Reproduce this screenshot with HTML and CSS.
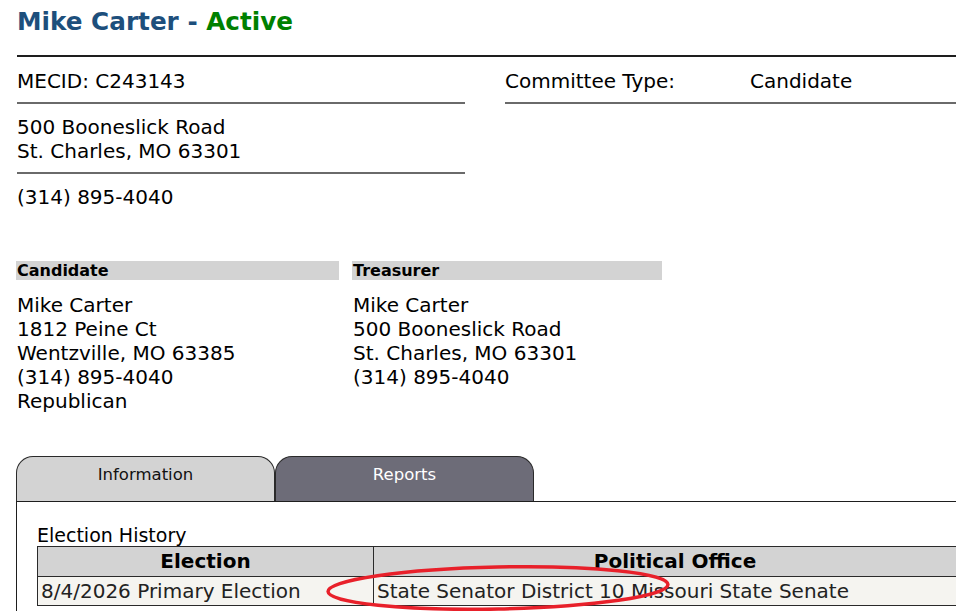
FILE: index.html
```html
<!DOCTYPE html>
<html>
<head>
<meta charset="utf-8">
<title>Mike Carter - Active</title>
<link rel="stylesheet" href="styles.css">
</head>
<body>
<div class="page">
  <h1 class="title">Mike Carter - <span class="status">Active</span></h1>
  <div class="rule"></div>

  <div class="summary">
    <div class="col-left">
      <div class="row">MECID: C243143</div>
      <div class="row">500 Booneslick Road<br>St. Charles, MO 63301</div>
      <div class="row last">(314) 895-4040</div>
    </div>
    <div class="col-right">
      <div class="row type">
        <span class="type-label">Committee Type:</span>
        <span class="type-value">Candidate</span>
      </div>
    </div>
  </div>

  <div class="people">
    <div class="person">
      <div class="person-head">Candidate</div>
      <div class="person-body">Mike Carter<br>1812 Peine Ct<br>Wentzville, MO 63385<br>(314) 895-4040<br>Republican</div>
    </div>
    <div class="person">
      <div class="person-head">Treasurer</div>
      <div class="person-body">Mike Carter<br>500 Booneslick Road<br>St. Charles, MO 63301<br>(314) 895-4040</div>
    </div>
  </div>

  <div class="tabs">
    <div class="tab tab-active">Information</div>
    <div class="tab tab-other">Reports</div>
  </div>
  <div class="panel">
    <div class="caption">Election History</div>
    <table class="history">
      <thead>
        <tr><th class="c-election">Election</th><th>Political Office</th></tr>
      </thead>
      <tbody>
        <tr><td>8/4/2026 Primary Election</td><td>State Senator District 10 Missouri State Senate</td></tr>
      </tbody>
    </table>
  </div>
</div>

<svg class="annot" width="956" height="611" viewBox="0 0 956 611">
  <ellipse cx="498" cy="588" rx="170" ry="21" transform="rotate(-1.2 498 588)" fill="none" stroke="#e8202a" stroke-width="3.5"/>
</svg>
</body>
</html>
```

FILE: styles.css
```css
html, body {
  margin: 0;
  padding: 0;
  overflow: hidden;
  background: #ffffff;
}

body {
  font-family: "DejaVu Sans", Verdana, sans-serif;
  font-size: 20px;
  color: #000000;
}

.page {
  width: 960px;
  padding: 7px 0 0 16px;
}

.title {
  margin: 0;
  font-size: 24.7px;
  line-height: 30px;
  font-weight: bold;
  color: #1d4f7c;
  padding-left: 1px;
}

.status {
  color: #008000;
}

.rule {
  margin-top: 18px;
  margin-left: 1px;
  height: 2px;
  background: #1e1e1e;
}

.summary {
  display: flex;
  gap: 40px;
  padding-left: 1px;
}

.col-left {
  width: 448px;
}

.col-right {
  flex: 1;
}

.row {
  padding: 12px 0 9px;
  line-height: 24px;
  border-bottom: 2px solid #6a6a6a;
}

.row + .row {
  padding-top: 11px;
}

.row.last {
  border-bottom: none;
}

.type {
  display: grid;
  grid-template-columns: 245px 1fr;
}

.people {
  display: grid;
  grid-template-columns: 323px 310px;
  column-gap: 13px;
  margin-top: 43px;
}

.person-head {
  background: #d3d3d3;
  font-size: 16px;
  font-weight: bold;
  line-height: 19px;
  padding-left: 1px;
}

.person-body {
  margin-top: 13px;
  line-height: 24px;
  padding-left: 1px;
}

.tabs {
  display: flex;
  margin-top: 43px;
}

.tab {
  width: 259px;
  height: 45px;
  box-sizing: border-box;
  border: 1px solid #2a2a2a;
  border-bottom: none;
  border-radius: 17px 17px 0 0;
  text-align: center;
  font-size: 16.5px;
  line-height: 20px;
  padding-top: 8px;
}

.tab-active {
  background: #d3d3d3;
  color: #111111;
}

.tab-other {
  background: #6d6c78;
  color: #ffffff;
}

.panel {
  border-top: 1px solid #1e1e1e;
  border-left: 1px solid #1e1e1e;
  padding: 22px 0 0 20px;
  height: 120px;
}

.caption {
  line-height: 22px;
  font-size: 19px;
}

.history {
  border-collapse: collapse;
  width: 940px;
}

.history th,
.history td {
  border: 1px solid #2a2a2a;
  font-size: 20px;
  padding: 0 3px;
}

.history th {
  background: #d3d3d3;
  font-weight: bold;
  height: 29px;
  line-height: 29px;
  text-align: center;
}

.history td {
  background: #f5f4f0;
  height: 28px;
  line-height: 28px;
  color: #222222;
}

.c-election {
  width: 329px;
}

.annot {
  position: absolute;
  left: 0;
  top: 0;
  pointer-events: none;
}
```
